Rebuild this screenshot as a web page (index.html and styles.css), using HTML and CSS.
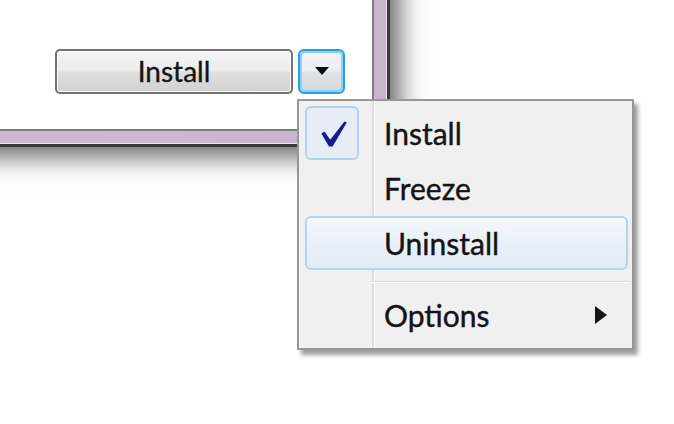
FILE: index.html
```html
<!DOCTYPE html>
<html lang="en">
<head>
<meta charset="utf-8">
<title>Install menu</title>
<link rel="stylesheet" href="styles.css">
</head>
<body>
<div class="desk">
  <div class="window">
    <div class="frame">
      <div class="client">
        <button class="btn btn-main">Install</button>
        <button class="btn btn-drop" aria-label="More"><span class="tri-down"></span></button>
      </div>
    </div>
  </div>

  <div class="menu">
    <div class="item">
      <span class="icon checked">
        <svg width="26" height="26" viewBox="0 0 26 26"><path d="M0.3 12.6 L3.6 10.5 L9.2 18.8 L23.4 0.4 L25.8 1.6 L11.6 25.4 L8.0 25.4 Z" fill="#1a1a8c"/></svg>
      </span>
      <span class="label">Install</span>
    </div>
    <div class="item">
      <span class="icon"></span>
      <span class="label">Freeze</span>
    </div>
    <div class="item hover">
      <span class="icon"></span>
      <span class="label">Uninstall</span>
    </div>
    <div class="sep"></div>
    <div class="item">
      <span class="icon"></span>
      <span class="label">Options</span>
      <span class="tri-right"></span>
    </div>
  </div>
</div>
</body>
</html>
```
FILE: styles.css
```css
html, body {
  margin: 0;
  padding: 0;
  background: #ffffff;
}

.desk {
  position: relative;
  width: 674px;
  height: 424px;
  overflow: hidden;
  background: #ffffff;
  font-family: "Segoe UI", Lato, "Liberation Sans", sans-serif;
  color: #141414;
}

/* window on the desktop */
.window {
  position: absolute;
  left: -40px;
  top: -40px;
  border: 3px solid #3a3a3a;
  box-shadow: 2px 2px 26px 6px rgba(0, 0, 0, 0.65);
}

.frame {
  border: 1px solid #ece4ee;
  background: linear-gradient(to right, #cdb9cf, #c9b5cc);
  padding: 12px;
}

.client {
  box-sizing: border-box;
  width: 398px;
  height: 155px;
  border: 2px solid #7d7d7d;
  background: #ffffff;
  display: flex;
  justify-content: flex-end;
  align-items: flex-end;
  gap: 5px;
  padding: 0 27px 35px 0;
}

.btn {
  box-sizing: border-box;
  height: 45px;
  margin: 0;
  padding: 0;
  font-family: inherit;
  color: #141414;
  -webkit-text-stroke: 0.35px #141414;
}

.btn-main {
  width: 238px;
  border: 2px solid #737373;
  border-radius: 5px;
  background: linear-gradient(to bottom, #f4f4f4 0%, #ececec 48%, #dedede 52%, #d2d2d2 100%);
  box-shadow: inset 0 0 0 1px #fbfbfb;
  font-size: 28px;
  line-height: 41px;
}

.btn-drop {
  width: 47px;
  border: 2px solid #2a9de3;
  border-radius: 6px;
  background: linear-gradient(to bottom, #f3f4f5 0%, #eceef0 48%, #dfe3e6 52%, #d4d9dd 100%);
  box-shadow: inset 0 0 0 2px #86d4f5;
  display: flex;
  align-items: center;
  justify-content: center;
}

.tri-down {
  width: 0;
  height: 0;
  border-left: 7px solid transparent;
  border-right: 7px solid transparent;
  border-top: 8px solid #0c0c0c;
  margin-top: -2px;
}

/* popup menu */
.menu {
  position: absolute;
  left: 297px;
  top: 99px;
  box-sizing: border-box;
  width: 337px;
  height: 251px;
  border: 2px solid #979797;
  background:
    linear-gradient(to right, transparent 73px, #dcdcdd 73px, #dcdcdd 75px, #ffffff 75px, #ffffff 76px, transparent 76px),
    #f0f0f0;
  box-shadow: 4px 5px 4px rgba(0, 0, 0, 0.38);
  padding: 5px 4px 5px 6px;
}

.item {
  box-sizing: border-box;
  height: 54px;
  margin-bottom: 1px;
  display: flex;
  align-items: center;
  border: 2px solid transparent;
  border-radius: 6px;
}

.item.hover {
  border-color: #b3d3f3;
  background: linear-gradient(to bottom, #f4f7fc 0%, #e9f0f9 55%, #e2ebf8 100%);
}

.icon {
  box-sizing: border-box;
  width: 54px;
  height: 54px;
  margin-left: -2px;
  flex: none;
  display: flex;
  align-items: center;
  justify-content: center;
}

.icon.checked {
  border: 2px solid #b3d0ef;
  border-radius: 6px;
  background: #e7edf6;
  padding: 1px 0 0 3px;
}

.label {
  margin-left: 25px;
  font-size: 30px;
  line-height: 54px;
  white-space: nowrap;
  -webkit-text-stroke: 0.4px #141414;
}

.sep {
  height: 1px;
  margin: 11px 0 5px 67px;
  background: #dedede;
  border-bottom: 1px solid #ffffff;
}

.tri-right {
  margin-left: auto;
  margin-right: 19px;
  width: 0;
  height: 0;
  border-top: 9px solid transparent;
  border-bottom: 9px solid transparent;
  border-left: 12px solid #151515;
}
```
